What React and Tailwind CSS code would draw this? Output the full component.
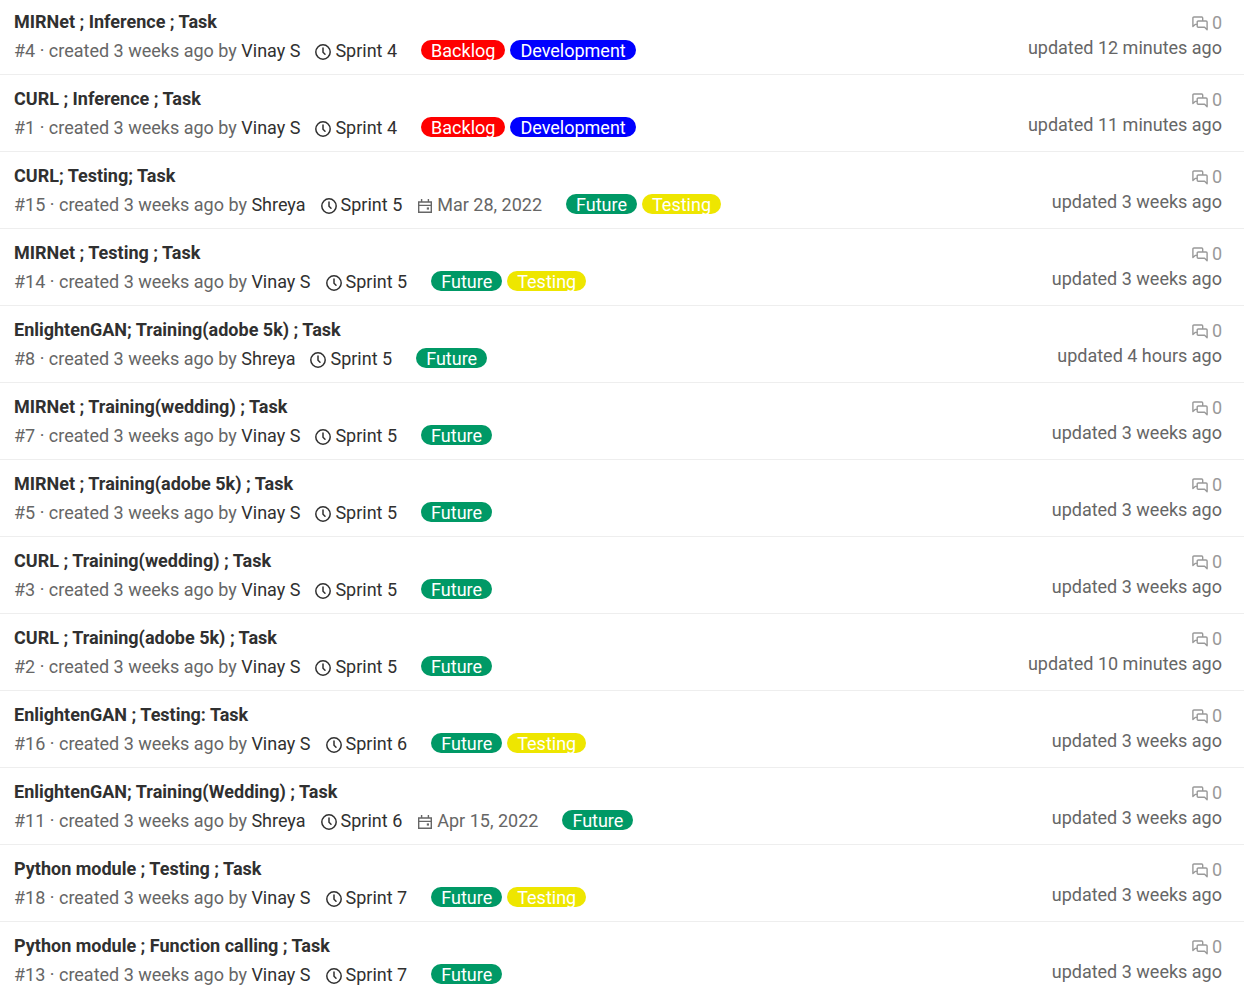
const labelColors = {
  Backlog: "bg-[#ff0000]",
  Development: "bg-[#0000ff]",
  Future: "bg-[#009966]",
  Testing: "bg-[#eee600]",
};

const issues = [
  ["MIRNet ; Inference ; Task", 4, "Vinay S", 4, "", ["Backlog", "Development"], "12 minutes"],
  ["CURL ; Inference ; Task", 1, "Vinay S", 4, "", ["Backlog", "Development"], "11 minutes"],
  ["CURL; Testing; Task", 15, "Shreya", 5, "Mar 28, 2022", ["Future", "Testing"], "3 weeks"],
  ["MIRNet ; Testing ; Task", 14, "Vinay S", 5, "", ["Future", "Testing"], "3 weeks"],
  ["EnlightenGAN; Training(adobe 5k) ; Task", 8, "Shreya", 5, "", ["Future"], "4 hours"],
  ["MIRNet ; Training(wedding) ; Task", 7, "Vinay S", 5, "", ["Future"], "3 weeks"],
  ["MIRNet ; Training(adobe 5k) ; Task", 5, "Vinay S", 5, "", ["Future"], "3 weeks"],
  ["CURL ; Training(wedding) ; Task", 3, "Vinay S", 5, "", ["Future"], "3 weeks"],
  ["CURL ; Training(adobe 5k) ; Task", 2, "Vinay S", 5, "", ["Future"], "10 minutes"],
  ["EnlightenGAN ; Testing: Task", 16, "Vinay S", 6, "", ["Future", "Testing"], "3 weeks"],
  ["EnlightenGAN; Training(Wedding) ; Task", 11, "Shreya", 6, "Apr 15, 2022", ["Future"], "3 weeks"],
  ["Python module ; Testing ; Task", 18, "Vinay S", 7, "", ["Future", "Testing"], "3 weeks"],
  ["Python module ; Function calling ; Task", 13, "Vinay S", 7, "", ["Future"], "3 weeks"],
];

function Clock() {
  return (
    <svg viewBox="0 0 16 16" className="mt-0.5 mr-1 size-4 shrink-0" fill="none" stroke="currentColor" strokeWidth="1.5" aria-hidden="true">
      <circle cx="8" cy="8" r="7.2" />
      <path d="M8 4v4.3l2 2" strokeLinecap="round" strokeLinejoin="round" />
    </svg>
  );
}

function Calendar() {
  return (
    <svg viewBox="0 0 16 16" className="mt-0.5 mr-1 size-4 shrink-0" fill="none" stroke="currentColor" strokeWidth="1.4" aria-hidden="true">
      <path d="M1.7 4h12.6v10.3H1.7zM1.7 7.4h12.6M4.6 1v3M11.4 1v3" />
      <path d="M9.8 9.4h2.2v2.2H9.8z" fill="currentColor" stroke="none" />
    </svg>
  );
}

function Comments() {
  return (
    <svg viewBox="0 0 16 16" className="mr-1 size-4 shrink-0" fill="none" stroke="currentColor" strokeWidth="1.4" strokeLinejoin="round" aria-hidden="true">
      <path d="M5.2 9.4H3.2L.9 11.6V3a1 1 0 0 1 1-1h7.8a1 1 0 0 1 1 1v3" />
      <path d="M6.3 6H14a1.1 1.1 0 0 1 1.1 1.1v7.7l-2.5-2.5H6.3a1.1 1.1 0 0 1-1.1-1.1V7.1A1.1 1.1 0 0 1 6.3 6z" />
    </svg>
  );
}

export default function App() {
  return (
    <ul className="mr-2 bg-white font-['Roboto',sans-serif] text-[18px] leading-6 text-[#666]">
      {issues.map(([title, id, author, sprint, due, labels, updated]) => (
        <li key={id} className="flex justify-between border-b border-[#eee] pt-3 pr-[22px] pb-[11px] pl-[14px] first:pt-[10px] last:border-0">
          <div>
            <a href="#" className="block font-bold text-[#303030]">{title}</a>
            <div className="mt-[5px] flex items-start whitespace-pre">
              <span>#{id} · created 3 weeks ago by <a href="#" className="text-[#303030]">{author}</a></span>
              <a href="#" className="ml-[15px] flex items-center text-[#303030]"><Clock />Sprint {sprint}</a>
              {due && <span className="ml-[15px] flex items-center"><Calendar />{due}</span>}
              <span className="mt-px ml-6 flex gap-[5px]">
                {labels.map((label) => (
                  <a key={label} href="#" className={`h-5 rounded-full px-[10px] leading-[22px] text-white ${labelColors[label]}`}>{label}</a>
                ))}
              </span>
            </div>
          </div>
          <div className="flex flex-col items-end pt-px">
            <a href="#" className="flex items-center text-[#999]" aria-label="0 comments"><Comments />0</a>
            <span className="mt-px">updated {updated} ago</span>
          </div>
        </li>
      ))}
    </ul>
  );
}
